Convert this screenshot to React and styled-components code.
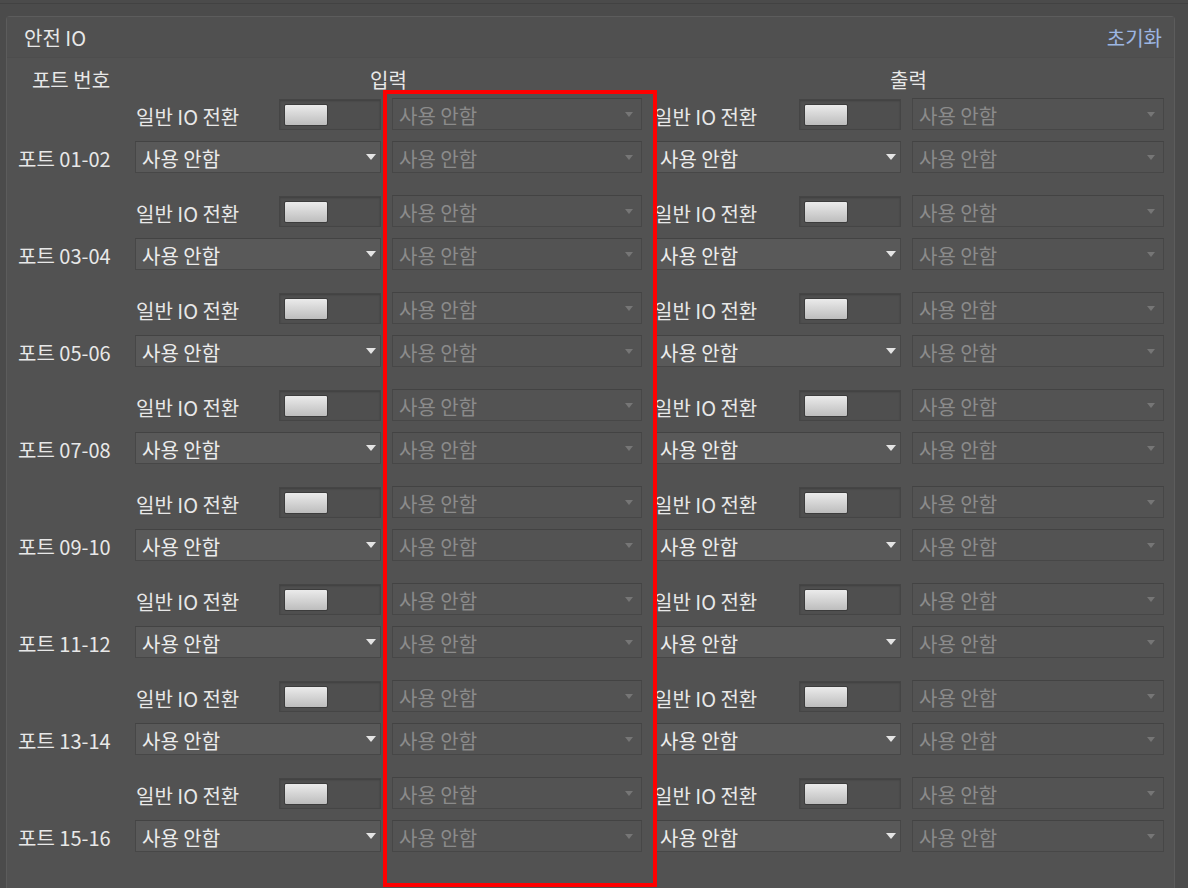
import React from 'react'
import styled, { createGlobalStyle } from 'styled-components'

const Page = createGlobalStyle`
  body {
    margin: 0;
    background: #4b4b4b;
    font-family: "Noto Sans CJK KR", "Noto Sans", sans-serif;
    color: #e8e8e8;
  }
`

const Screen = styled.div`
  position: relative;
  height: 888px;
  overflow: hidden;
  box-sizing: border-box;
  padding: 3px 13px 0 6px;
`

const TopRule = styled.div`
  height: 1px;
  margin: 0 -13px 12px -6px;
  background: #424242;
`

const Panel = styled.div`
  height: 900px;
  background: #525252;
  border: 1px solid #5c5c5c;
  border-bottom: none;
  border-radius: 4px 4px 0 0;
`

const PanelHeader = styled.div`
  display: flex;
  justify-content: space-between;
  align-items: center;
  height: 40px;
  padding: 0 12px 0 17px;
  border-bottom: 1px solid #4d4d4d;
  background: #505050;
`

const Title = styled.span`
  font-size: 20px;
  line-height: 1;
  padding-top: 1px;
`

const ResetLink = styled.span`
  font-size: 20px;
  line-height: 1;
  padding-top: 1px;
  color: #9db6e2;
  cursor: pointer;
`

const PanelBody = styled.div`
  padding: 7px 0 0 11px;
`

const Columns = styled.div`
  display: grid;
  grid-template-columns: 106px 246px 250px 248px 252px;
  column-gap: 11px;
`

const HeadRow = styled(Columns)`
  height: 26px;
  align-items: center;
  margin-bottom: 7px;
`

const HeadCell = styled.div`
  grid-column: span ${(p) => p.$span || 1};
  text-align: center;
  font-size: 20px;
  line-height: 1;
  padding-top: 3px;
`

const Groups = styled.div`
  display: flex;
  flex-direction: column;
  gap: 22px;
`

const PortGroup = styled(Columns)`
  grid-template-rows: 32px 32px;
  row-gap: 11px;
`

const PortLabel = styled.div`
  display: flex;
  align-items: center;
  padding-top: 3px;
  font-size: 20px;
  white-space: nowrap;
`

const SwitchCell = styled.div`
  display: flex;
  align-items: center;
  justify-content: space-between;
  font-size: 20px;
  white-space: nowrap;
  padding-left: 1px;
`

const SwitchText = styled.span`
  padding-top: 4px;
`

const Toggle = styled.div`
  box-sizing: border-box;
  width: 102px;
  height: 31px;
  padding: 4px;
  background: #4f4f4f;
  border: 1px solid #454545;
  box-shadow: inset 0 1px 2px rgba(0, 0, 0, 0.2);
`

const Knob = styled.div`
  width: 44px;
  height: 22px;
  box-sizing: border-box;
  border: 1px solid #3c3c3c;
  border-radius: 2px;
  background: linear-gradient(#ebebeb, #bdbdbd);
`

const Dropdown = styled.div`
  box-sizing: border-box;
  height: 32px;
  display: flex;
  align-items: center;
  justify-content: space-between;
  padding: 0 ${(p) => (p.$disabled ? '8px' : '4px')} 0 6px;
  background: ${(p) => (p.$disabled ? '#535353' : '#595959')};
  border: 1px solid #474747;
  border-top-color: #434343;
  color: ${(p) => (p.$disabled ? '#8b8b8b' : '#ececec')};
  font-size: 20px;
  white-space: nowrap;
`

const DropdownText = styled.span`
  padding-top: 2px;
`

const Arrow = styled.span`
  width: 0;
  height: 0;
  border-left: ${(p) => (p.$disabled ? '4.5px' : '5.5px')} solid transparent;
  border-right: ${(p) => (p.$disabled ? '4.5px' : '5.5px')} solid transparent;
  border-top: ${(p) => (p.$disabled ? '5px' : '6px')} solid
    ${(p) => (p.$disabled ? '#767676' : '#e4e4e4')};
`

const Highlight = styled.div`
  position: absolute;
  left: 383px;
  top: 90px;
  width: 274px;
  height: 797px;
  box-sizing: border-box;
  border: 4px solid #ff0000;
  pointer-events: none;
`

const ports = ['01-02', '03-04', '05-06', '07-08', '09-10', '11-12', '13-14', '15-16']

const Select = ({ disabled }) => (
  <Dropdown $disabled={disabled}>
    <DropdownText>사용 안함</DropdownText>
    <Arrow $disabled={disabled} />
  </Dropdown>
)

const Switch = () => (
  <SwitchCell>
    <SwitchText>일반 IO 전환</SwitchText>
    <Toggle>
      <Knob />
    </Toggle>
  </SwitchCell>
)

const App = () => (
  <Screen>
    <Page />
    <TopRule />
    <Panel>
      <PanelHeader>
        <Title>안전 IO</Title>
        <ResetLink>초기화</ResetLink>
      </PanelHeader>
      <PanelBody>
        <HeadRow>
          <HeadCell>포트 번호</HeadCell>
          <HeadCell $span={2}>입력</HeadCell>
          <HeadCell $span={2}>출력</HeadCell>
        </HeadRow>
        <Groups>
          {ports.map((port) => (
            <PortGroup key={port}>
              <div />
              <Switch />
              <Select disabled />
              <Switch />
              <Select disabled />
              <PortLabel>포트 {port}</PortLabel>
              <Select />
              <Select disabled />
              <Select />
              <Select disabled />
            </PortGroup>
          ))}
        </Groups>
      </PanelBody>
    </Panel>
    <Highlight />
  </Screen>
)

export default App
